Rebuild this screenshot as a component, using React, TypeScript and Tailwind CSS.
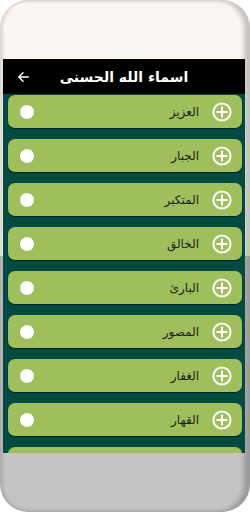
import React from 'react';

const NAMES = ['العزيز', 'الجبار', 'المتكبر', 'الخالق', 'البارئ', 'المصور', 'الغفار', 'القهار'];

function PlusCircle() {
  return (
    <svg width="20" height="20" viewBox="0 0 20 20" fill="none" stroke="white" strokeWidth="2" strokeLinecap="round">
      <circle cx="10" cy="10" r="8.6" />
      <path d="M10 5.2v9.6M5.2 10h9.6" />
    </svg>
  );
}

function NameRow({ name }: { name: string }) {
  return (
    <div
      dir="rtl"
      className="h-[33px] shrink-0 rounded-[7px] bg-[#9fbe5c] flex items-center pr-[10px] pl-[12px] shadow-[0_1px_1px_rgba(0,0,0,0.55)]"
    >
      <PlusCircle />
      <span className="mr-[13px] text-[12px] text-[#1e1e1e] font-['DejaVu_Sans',sans-serif] leading-none">{name}</span>
      <div className="mr-auto w-[14px] h-[14px] rounded-full bg-white" />
    </div>
  );
}

export default function App() {
  return (
    <div className="w-[250px] h-[512px] bg-white">
      <div className="h-full rounded-[28px] overflow-hidden flex flex-col bg-[linear-gradient(to_bottom,#fbf6f2_0%,#faf5f1_50%,#c9c7c6_50%,#c6c4c3_100%)] shadow-[inset_3px_0_3px_rgba(0,0,0,0.12),inset_-6px_0_5px_rgba(0,0,0,0.22)]">
        {/* top bezel */}
        <div className="h-[59px] shrink-0" />

        {/* screen */}
        <div className="h-[394px] shrink-0 ml-[3px] mr-[5px] flex flex-col overflow-hidden">
          <div className="h-[35px] shrink-0 bg-black flex items-center relative">
            <svg className="absolute left-[13px]" width="15" height="16" viewBox="0 0 16 16" fill="none" stroke="white" strokeWidth="1.6" strokeLinecap="round" strokeLinejoin="round">
              <path d="M13 8H3M7.5 3.5 3 8l4.5 4.5" />
            </svg>
            <div dir="rtl" className="w-full text-center text-white text-[14px] font-bold font-['DejaVu_Sans',sans-serif] pt-[1px]">
              اسماء الله الحسنى
            </div>
          </div>
          <div className="flex-1 bg-[#034a40] pl-[5px] pr-[3px] pt-[1px] flex flex-col gap-[11px] overflow-hidden">
            {NAMES.map((n) => (
              <NameRow key={n} name={n} />
            ))}
            <div className="h-[33px] shrink-0 rounded-[7px] bg-[#9fbe5c]" />
          </div>
        </div>

        {/* bottom bezel */}
        <div className="flex-1" />
      </div>
    </div>
  );
}
